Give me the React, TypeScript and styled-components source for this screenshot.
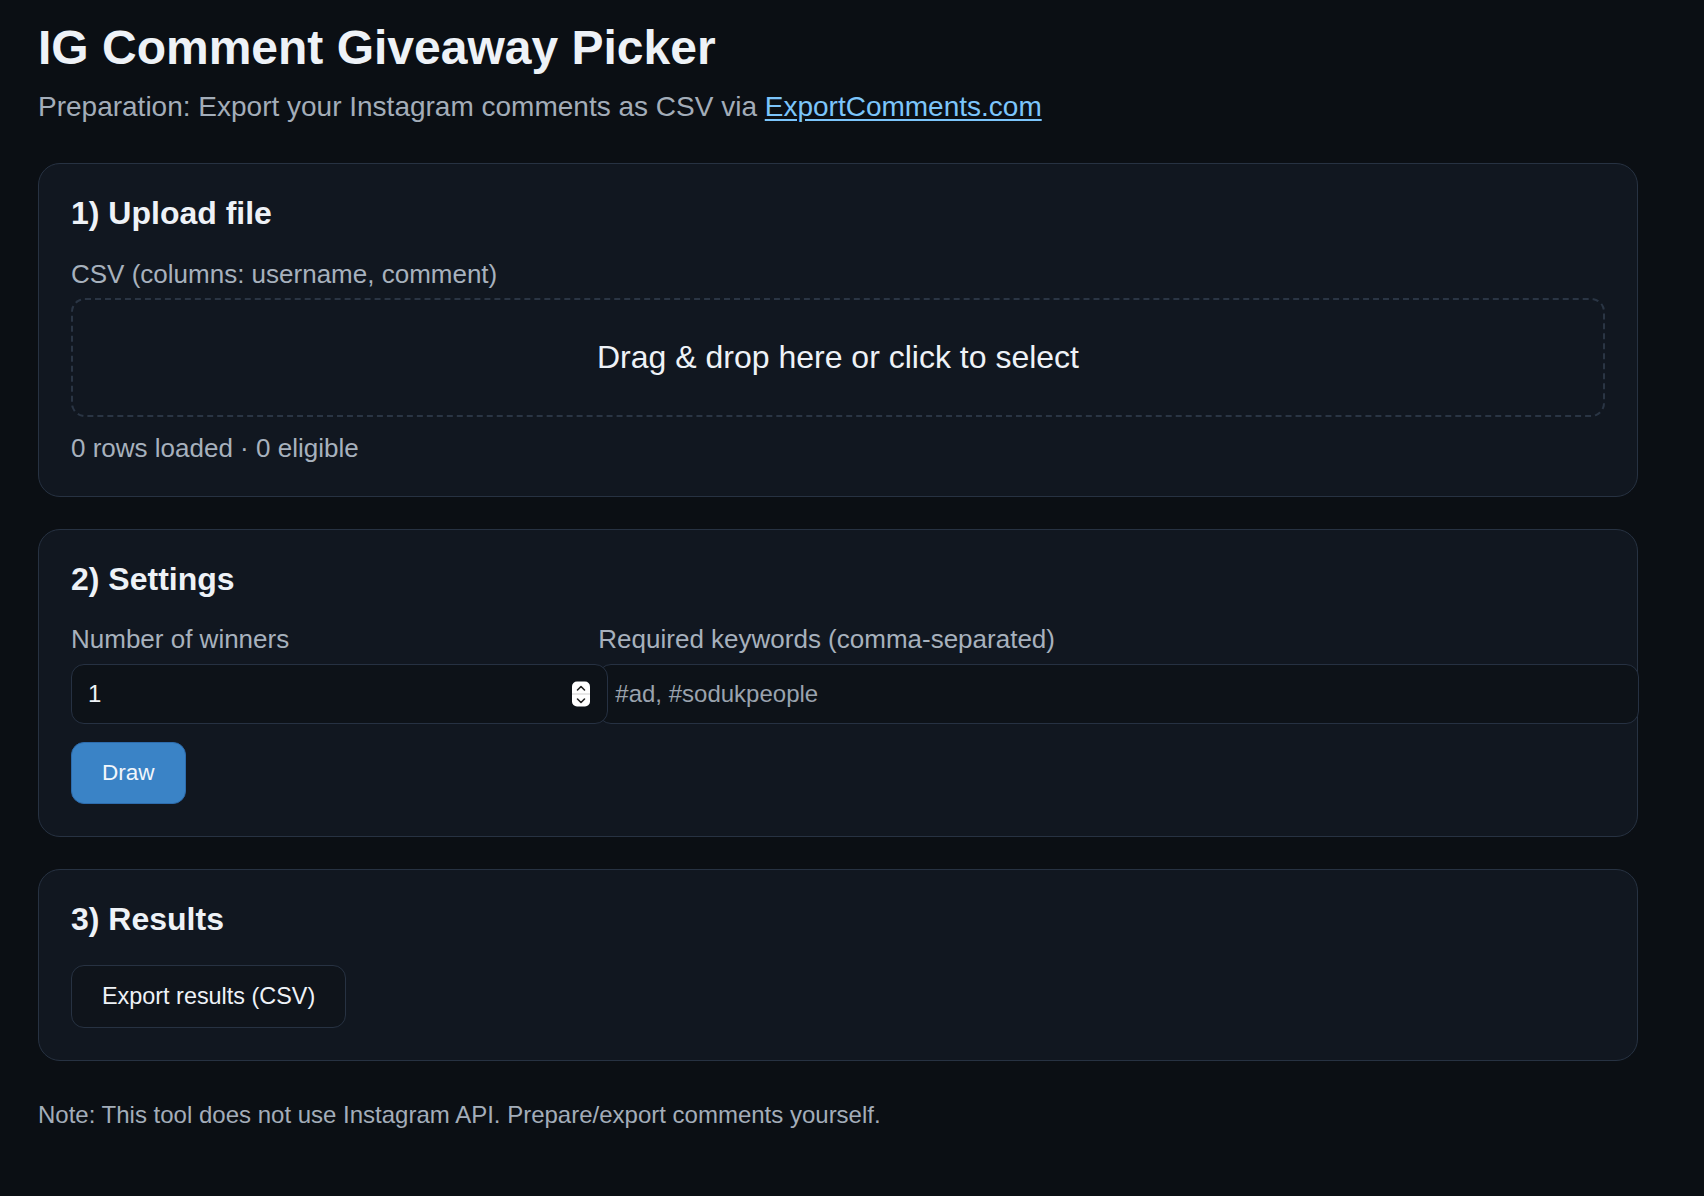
import React from "react";
import styled, { createGlobalStyle } from "styled-components";

const GlobalStyle = createGlobalStyle`
  html, body {
    margin: 0;
    padding: 0;
    background: #0b0f14;
  }
  body {
    font-family: "Liberation Sans", Arial, Helvetica, sans-serif;
    color: #e6ebf1;
  }
  * { box-sizing: content-box; }
`;

const Page = styled.main`
  padding: 20px 38px 40px;
  max-width: 1600px;
`;

const Title = styled.h1`
  margin: 0 0 16px;
  font-size: 48px;
  line-height: 1.15;
  font-weight: 700;
  color: #eef2f7;
`;

const Subtitle = styled.p`
  margin: 0 0 40px;
  font-size: 28px;
  line-height: 1.15;
  color: #a3adb9;
`;

const Link = styled.a`
  color: #7cc5fb;
  text-decoration: underline;
  text-underline-offset: 3px;
`;

const Stack = styled.div`
  display: flex;
  flex-direction: column;
  gap: 32px;
`;

const Card = styled.section`
  background: #111720;
  border: 1px solid #273242;
  border-radius: 22px;
  padding: 32px;
`;

const CardTitle = styled.h2`
  margin: 0 0 28px;
  font-size: 32px;
  line-height: 1.1;
  font-weight: 700;
  color: #eef2f7;
`;

const Label = styled.label`
  display: block;
  margin: 0 0 9px;
  font-size: 26px;
  line-height: 1.15;
  color: #a7b1bd;
`;

const DropZone = styled.div`
  border: 2px dashed #2a3544;
  border-radius: 14px;
  padding: 39px 16px;
  text-align: center;
  font-size: 32px;
  line-height: 1.15;
  color: #eef2f7;
  cursor: pointer;
`;

const Stats = styled.div`
  margin-top: 17px;
  font-size: 26px;
  line-height: 1.15;
  color: #a7b1bd;
`;

const FieldGrid = styled.div`
  display: grid;
  grid-template-columns: 1fr 2fr;
  column-gap: 24px;
`;

const Field = styled.div`
  min-width: 0;
  display: flex;
  flex-direction: column;
`;

const InputWrap = styled.div`
  position: relative;
`;

const Input = styled.input`
  display: block;
  width: 100%;
  margin: 0;
  padding: 15px 16px;
  border: 1px solid #263142;
  border-radius: 13px;
  background: #0d1218;
  color: #eef2f7;
  font-family: "Liberation Sans", Arial, Helvetica, sans-serif;
  font-size: 24px;
  line-height: 1.15;
  outline: none;
  -moz-appearance: textfield;
  &::placeholder {
    color: #9aa3ae;
  }
  &::-webkit-inner-spin-button,
  &::-webkit-outer-spin-button {
    -webkit-appearance: none;
    margin: 0;
  }
`;

const Spinner = styled.div`
  position: absolute;
  top: 50%;
  right: -16px;
  transform: translateY(-50%);
  width: 18px;
  height: 25px;
  border-radius: 5px;
  background: #ffffff;
  display: flex;
  flex-direction: column;
  align-items: center;
  justify-content: space-between;
  overflow: hidden;
`;

const SpinHalf = styled.div<{ $top?: boolean }>`
  flex: 1;
  width: 100%;
  display: flex;
  align-items: center;
  justify-content: center;
  border-bottom: ${(p) => (p.$top ? "1px solid #d0d0d0" : "none")};
`;

const Button = styled.button<{ $variant?: "primary" | "ghost"; $size?: number }>`
  align-self: flex-start;
  margin: 0;
  padding: 17px 30px;
  border-radius: 13px;
  font-family: "Liberation Sans", Arial, Helvetica, sans-serif;
  font-size: ${(p) => p.$size ?? 22.5}px;
  line-height: 1.15;
  cursor: pointer;
  ${(p) =>
    p.$variant === "primary"
      ? `
    background: #3a83c6;
    border: 1px solid #2d6cad;
    color: #f2f6fb;
  `
      : `
    background: #0f141b;
    border: 1px solid #273242;
    color: #eef2f7;
  `}
`;

const Actions = styled.div<{ $top?: number }>`
  display: flex;
  margin-top: ${(p) => p.$top ?? 18}px;
`;

const Note = styled.p`
  margin: 40px 0 0;
  font-size: 24px;
  line-height: 1.15;
  color: #a3adb9;
`;

const Chevron = ({ up }: { up?: boolean }) => (
  <svg width="10" height="7" viewBox="0 0 10 7" aria-hidden>
    <path
      d={up ? "M1.5 5.5 L5 2 L8.5 5.5" : "M1.5 1.5 L5 5 L8.5 1.5"}
      fill="none"
      stroke="#222"
      strokeWidth="1.6"
      strokeLinecap="round"
      strokeLinejoin="round"
    />
  </svg>
);

export default function App() {
  return (
    <>
      <GlobalStyle />
      <Page>
        <Title>IG Comment Giveaway Picker</Title>
        <Subtitle>
          Preparation: Export your Instagram comments as CSV via{" "}
          <Link href="#">ExportComments.com</Link>
        </Subtitle>
        <Stack>
          <Card>
            <CardTitle>1) Upload file</CardTitle>
            <Label>CSV (columns: username, comment)</Label>
            <DropZone>Drag &amp; drop here or click to select</DropZone>
            <Stats>0 rows loaded · 0 eligible</Stats>
          </Card>
          <Card>
            <CardTitle>2) Settings</CardTitle>
            <FieldGrid>
              <Field>
                <Label>Number of winners</Label>
                <InputWrap>
                  <Input type="number" defaultValue={1} min={1} />
                  <Spinner>
                    <SpinHalf $top>
                      <Chevron up />
                    </SpinHalf>
                    <SpinHalf>
                      <Chevron />
                    </SpinHalf>
                  </Spinner>
                </InputWrap>
              </Field>
              <Field>
                <Label>Required keywords (comma-separated)</Label>
                <Input type="text" placeholder="#ad, #sodukpeople" />
              </Field>
            </FieldGrid>
            <Actions>
              <Button $variant="primary">Draw</Button>
            </Actions>
          </Card>
          <Card>
            <CardTitle>3) Results</CardTitle>
            <Actions $top={0}>
              <Button $size={23.4}>Export results (CSV)</Button>
            </Actions>
          </Card>
        </Stack>
        <Note>Note: This tool does not use Instagram API. Prepare/export comments yourself.</Note>
      </Page>
    </>
  );
}
